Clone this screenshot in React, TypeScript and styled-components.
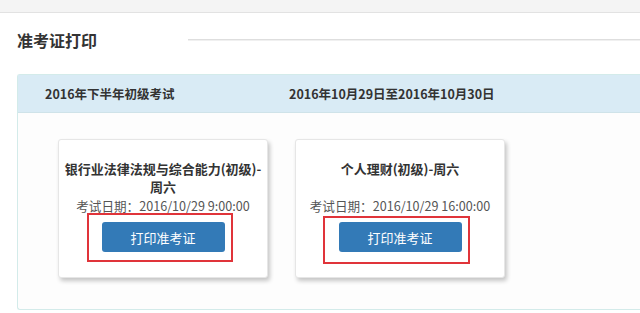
import styled, { createGlobalStyle } from 'styled-components';

const GlobalStyle = createGlobalStyle`
  html, body {
    margin: 0;
    padding: 0;
    background: #ffffff;
    font-family: 'Noto Sans CJK SC', 'Noto Sans', sans-serif;
    color: #333;
  }
`;

interface Exam {
  subject: string;
  date: string;
  mark: { top: number; left: number; right: number; bottom: number };
}

const exams: Exam[] = [
  {
    subject: '银行业法律法规与综合能力(初级)-周六',
    date: '考试日期：2016/10/29 9:00:00',
    mark: { top: 9, left: 15, right: 8, bottom: 10 },
  },
  {
    subject: '个人理财(初级)-周六',
    date: '考试日期：2016/10/29 16:00:00',
    mark: { top: 6, left: 16, right: 8, bottom: 12 },
  },
];

function App() {
  return (
    <Page>
      <GlobalStyle />
      <TopStrip />
      <TitleRow>
        <Title>准考证打印</Title>
        <TitleRule />
      </TitleRow>
      <Panel>
        <PanelHeader>
          <HeaderCell $width={244}>2016年下半年初级考试</HeaderCell>
          <HeaderCell>2016年10月29日至2016年10月30日</HeaderCell>
        </PanelHeader>
        <PanelBody>
          {exams.map(exam => (
            <Card key={exam.subject}>
              <Subject>{exam.subject}</Subject>
              <ExamDate>{exam.date}</ExamDate>
              <ButtonWrap>
                <PrintButton>打印准考证</PrintButton>
                <Mark
                  $top={exam.mark.top}
                  $left={exam.mark.left}
                  $right={exam.mark.right}
                  $bottom={exam.mark.bottom}
                />
              </ButtonWrap>
            </Card>
          ))}
        </PanelBody>
      </Panel>
    </Page>
  );
}

const Page = styled.div`
  width: 640px;
  height: 313px;
  overflow: hidden;
  background: #fff;
`;

const TopStrip = styled.div`
  height: 12px;
  background: #f4f4f4;
  border-bottom: 1px solid #e2e2e2;
`;

const TitleRow = styled.div`
  display: flex;
  align-items: center;
  height: 54px;
  padding-left: 17px;
`;

const Title = styled.h2`
  margin: 0;
  font-size: 16px;
  font-weight: bold;
  color: #333;
  width: 171px;
  line-height: 22px;
`;

const TitleRule = styled.div`
  flex: 1;
  height: 0;
  border-top: 1px solid #dedede;
  border-bottom: 1px solid #f0f0f0;
`;

const Panel = styled.div`
  margin: 7px 0 0 17px;
  width: 640px;
  height: 236px;
  border: 1px solid #d3ebea;
  border-right: none;
  border-radius: 3px 0 0 3px;
  box-sizing: border-box;
  background: #fdfdfd;
`;

const PanelHeader = styled.div`
  display: flex;
  align-items: center;
  height: 37px;
  padding-left: 27px;
  background: #d9ebf5;
  border-bottom: 1px solid #cfe3e9;
`;

const HeaderCell = styled.div<{ $width?: number }>`
  width: ${p => (p.$width ? `${p.$width}px` : 'auto')};
  font-size: 12.5px;
  font-weight: bold;
  color: #333;
`;

const PanelBody = styled.div`
  display: flex;
  gap: 27px;
  padding: 26px 0 0 40px;
`;

const Card = styled.div`
  width: 210px;
  height: 139px;
  box-sizing: border-box;
  padding: 20px 2px 0;
  background: #fff;
  border: 1px solid #e6e6e6;
  border-radius: 3px;
  box-shadow: 2px 3px 4px rgba(0, 0, 0, 0.22);
  display: flex;
  flex-direction: column;
  align-items: center;
  text-align: center;
`;

const Subject = styled.div`
  min-height: 36px;
  font-size: 13px;
  font-weight: bold;
  line-height: 18px;
  color: #333;
`;

const ExamDate = styled.div`
  margin-top: 1px;
  font-size: 12.6px;
  line-height: 17px;
  color: #555;
`;

const ButtonWrap = styled.div`
  position: relative;
  margin-top: 8px;
`;

const PrintButton = styled.button`
  display: block;
  width: 123px;
  height: 30px;
  border: none;
  border-radius: 3px;
  background: #337ab7;
  color: #fff;
  font-family: inherit;
  font-size: 13px;
  cursor: pointer;
`;

const Mark = styled.span<{ $top: number; $left: number; $right: number; $bottom: number }>`
  position: absolute;
  top: ${p => -p.$top}px;
  left: ${p => -p.$left}px;
  right: ${p => -p.$right}px;
  bottom: ${p => -p.$bottom}px;
  border: 2px solid #e0343a;
  pointer-events: none;
`;

export default App;
